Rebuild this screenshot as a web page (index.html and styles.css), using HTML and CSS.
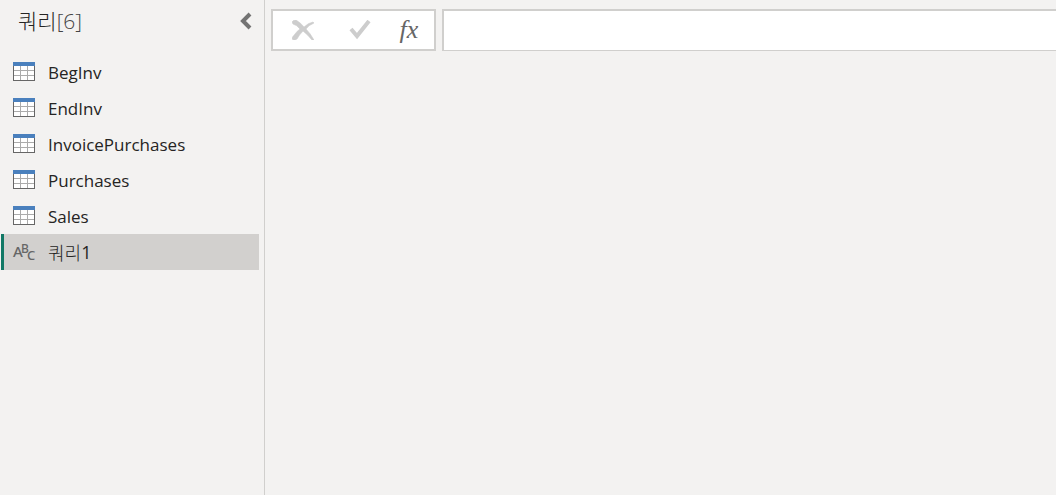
FILE: index.html
```
<!DOCTYPE html>
<html lang="ko">
<head>
	<meta charset="UTF-8">
	<title>쿼리</title>
<link rel="stylesheet" href="styles.css">
</head>
<body>
	<svg class="defs" aria-hidden="true">
		<symbol id="icon-table" viewBox="0 0 22 19">
			<path fill="#fff" d="M0 0h22v19H0z"/>
			<path fill="#ababab" d="M7 4h1v14H7zM14 4h1v14h-1zM1 8h20v1H1zM1 13h20v1H1z"/>
			<path fill="#666" d="M0 4h1v14h20V4h1v15H0z"/>
			<path fill="#4a80bd" d="M0 0h22v4H0z"/>
		</symbol>
	</svg>
	<div class="app">
		<aside class="sidebar">
			<div class="sidebar-head">
				<h1>쿼리<span class="count">[6]</span></h1>
				<button type="button" class="collapse" aria-label="접기">
					<svg width="12" height="18" viewBox="0 0 12 18"><path fill="none" stroke="#737373" stroke-width="4" d="M10 2L3 9l7 7"/></svg>
				</button>
			</div>
			<ul class="queries">
				<li><a href="#"><svg class="icon"><use href="#icon-table"/></svg>BegInv</a></li>
				<li><a href="#"><svg class="icon"><use href="#icon-table"/></svg>EndInv</a></li>
				<li><a href="#"><svg class="icon"><use href="#icon-table"/></svg>InvoicePurchases</a></li>
				<li><a href="#"><svg class="icon"><use href="#icon-table"/></svg>Purchases</a></li>
				<li><a href="#"><svg class="icon"><use href="#icon-table"/></svg>Sales</a></li>
				<li><a href="#" class="on">
					<svg class="icon abc" viewBox="0 0 22 19"><text x="0" y="15" font-size="15">A</text><text x="8" y="11" font-size="12">B</text><text x="14" y="18" font-size="13">C</text></svg>쿼리<span class="num">1</span></a></li>
			</ul>
		</aside>
		<main class="content">
			<div class="formula">
				<div class="tools">
					<button type="button" aria-label="취소" disabled>
						<svg width="22" height="20" viewBox="0 0 22 20"><path fill="#cdcdcd" stroke="#cdcdcd" stroke-width=".6" d="M0 2Q1 0 4 0q5 3 8 7 4-4 9-5l1 1q-5 2-8 6 4 4 8 11h-2q-4-5-9-9-4 4-6 8-3 2-5 0 0-2 3-5 2-3 5-5Q5 5 1 4z"/></svg>
					</button>
					<button type="button" aria-label="확인" disabled>
						<svg width="22" height="20" viewBox="0 0 22 20"><path fill="none" stroke="#cdcdcd" stroke-width="4" d="M2 9l6 7L20 1"/></svg>
					</button>
					<button type="button" class="fx" aria-label="수식">fx</button>
				</div>
				<input type="text" class="formula-input" aria-label="수식 입력">
			</div>
		</main>
	</div>
</body>
</html>
```
FILE: styles.css
```
* {
	margin: 0;
	padding: 0;
	box-sizing: border-box;
}
body {
	background: #f3f2f1;
	color: #252423;
	font-family: "Open Sans", "Noto Sans CJK KR", sans-serif;
	font-size: 17px;
}
button {
	border: none;
	background: none;
	display: flex;
	align-items: center;
	justify-content: center;
}
.defs {
	display: none;
}
.app {
	display: flex;
	min-height: 100vh;
}
.sidebar {
	flex: none;
	width: 265px;
	border-right: 1px solid #d0cfcd;
}
.sidebar-head {
	display: flex;
	align-items: center;
	justify-content: space-between;
	height: 42px;
	padding: 0 12px 0 18px;
	margin-bottom: 12px;
}
.sidebar-head h1 {
	font-size: 21px;
	font-weight: 300;
	line-height: 42px;
}
.count {
	color: #444;
}
.collapse {
	width: 12px;
	height: 40px;
}
.queries {
	list-style: none;
	padding: 0 5px 0 1px;
}
.queries a {
	display: flex;
	align-items: center;
	height: 36px;
	padding-left: 9px;
	border-left: 3px solid transparent;
	color: #252423;
	text-decoration: none;
}
.queries .on {
	background: #d2d0ce;
	border-left-color: #117865;
	font-size: 18px;
	font-weight: 300;
}
.num {
	font-weight: 400;
}
.icon {
	width: 22px;
	height: 19px;
	margin: 0 13px 2px 0;
}
.abc {
	fill: #666;
	font-family: "Noto Sans", sans-serif;
	font-weight: 500;
	overflow: visible;
}
.content {
	flex: 1;
	min-width: 0;
	padding: 9px 0 0 6px;
}
.formula {
	display: flex;
	gap: 6px;
	height: 42px;
}
.tools {
	display: flex;
	align-items: center;
	flex: none;
	width: 165px;
	padding: 0 12px 0 10px;
	justify-content: space-between;
	border: 2px solid #d0cfcd;
	background: #fff;
}
.tools button {
	width: 40px;
	height: 36px;
}
.tools .fx {
	width: 26px;
	color: #666;
	font: italic 26px/32px "Liberation Serif", serif;
}
.formula-input {
	flex: 1;
	min-width: 0;
	padding: 0 8px;
	border: 2px solid #d0cfcd;
	border-right: none;
	border-bottom-width: 1px;
	background: #fff;
	font: inherit;
}
```
